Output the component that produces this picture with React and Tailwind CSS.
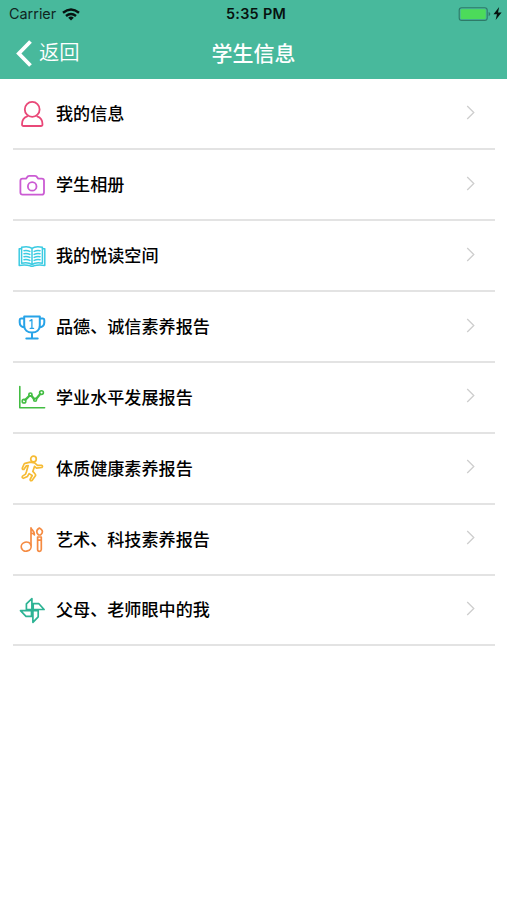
import React from "react";

const iconProps = {
  viewBox: "0 0 28 28",
  fill: "none",
  strokeWidth: 1.8,
  strokeLinejoin: "round",
  strokeLinecap: "round",
  className: "w-7 h-7 shrink-0",
};

const Person = () => (
  <svg {...iconProps} stroke="#e94878">
    <ellipse cx="14.2" cy="9.4" rx="7.4" ry="7.5" />
    <path d="M9.2 16.4C5.8 17.6 4 20.4 4 24.2Q4 26 5.6 26H22.8Q24.5 26 24.5 24.2C24.5 20.4 22.6 17.6 19.2 16.4" />
  </svg>
);

const Camera = () => (
  <svg {...iconProps} stroke="#cb5bd3">
    <path d="M4.6 7.6H8L10 5.2Q10.5 4.8 11.2 4.8H17Q17.7 4.8 18.2 5.2L20.2 7.6H23.8Q26 7.6 26 9.8V21.4Q26 23.6 23.8 23.6H4.6Q2.4 23.6 2.4 21.4V9.8Q2.4 7.6 4.6 7.6Z" />
    <circle cx="14.2" cy="15.4" r="4.3" />
  </svg>
);

const Book = () => (
  <svg {...iconProps} stroke="#3ccbe2" strokeWidth={1.5}>
    <path d="M14 6.4C11.8 4.6 7.4 4.4 3.6 5.2V21.2C7.4 20.5 11.8 20.9 14 22.7C16.2 20.9 20.6 20.5 24.4 21.2V5.2C20.6 4.4 16.2 4.6 14 6.4ZM14 6.4V22.7" />
    <path d="M3.5 6.8H1.2V23.4C5 23 9 22.9 12.2 23.8Q14 24.8 15.8 23.8C19 22.9 23 23 26.8 23.4V6.8H24.5" />
    <path d="M6 8.7Q9 8 11.8 9.4M6 11.7Q9 11 11.8 12.4M6 14.7Q9 14 11.8 15.4M6 17.7Q9 17 11.8 18.4M22 8.7Q19 8 16.2 9.4M22 11.7Q19 11 16.2 12.4M22 14.7Q19 14 16.2 15.4M22 17.7Q19 17 16.2 18.4" />
  </svg>
);

const Trophy = () => (
  <svg {...iconProps} stroke="#27a3e8" strokeWidth={2}>
    <path d="M6.2 3.4H21.8V12.4C21.8 17 18.4 19.4 14 19.4S6.2 17 6.2 12.4ZM6.2 5.5H3Q1.7 5.5 1.7 7V9.6C1.7 12.4 3.8 14.2 6.6 14.6M21.8 5.5H25Q26.3 5.5 26.3 7V9.6C26.3 12.4 24.2 14.2 21.4 14.6M14 19.6V25.4M8.3 25.6H19.7" />
    <path d="M11.9 7.9L13.9 6.6V15.4M12.2 15.4H15.6" strokeWidth="1.3" />
  </svg>
);

const Chart = () => (
  <svg {...iconProps} stroke="#43bd43" strokeWidth={1.6}>
    <path d="M1.8 3.6V24.7H26.6" />
    <path d="M7.3 16.9L11.4 12.8M13.5 12.8L16 16M18.3 15.7L22.2 11" strokeWidth="2.3" />
    <circle cx="6" cy="18.2" r="1.8" />
    <circle cx="12.4" cy="11.6" r="1.6" />
    <circle cx="17.1" cy="16.8" r="1.5" />
    <circle cx="23.5" cy="9.6" r="1.9" />
  </svg>
);

const Runner = () => (
  <svg {...iconProps} stroke="#f6bb34" strokeWidth={1.7}>
    <circle cx="15.5" cy="5" r="2.8" />
    <path d="M12 8.2L7.2 9.3Q6.3 9.6 5.9 10.5L4.3 14.2Q4.2 15.8 5.8 15.4L8.2 11.9L10.2 11.5L8.5 17.4L7.6 20.1L4.5 22.1Q3.5 23.8 5.4 24.3L9.5 22.4L11.1 19.6L14.2 21.5L12.1 25.5Q12.2 27.3 14 26.5L17.6 21.5Q17.8 20.6 17 19.8L14.8 17.4L16.5 12.4L18.5 14.2L23.8 13.5Q25.3 12.2 23.6 11.3L19.5 11.4L16.6 8.9Z" />
  </svg>
);

const Arts = () => (
  <svg {...iconProps} stroke="#f58b42" strokeWidth={1.7}>
    <ellipse cx="8.2" cy="21.6" rx="5" ry="4.5" transform="rotate(-16 8.2 21.6)" />
    <path d="M13 20V2.8C13.3 5.2 16.8 5.8 16.4 9.8C15.6 8.4 14.2 8.2 13 8" />
    <path d="M21.4 3C18.8 4.5 18.3 6.3 19.2 8.3L20.5 10H22.6L24 8.3C25 6.3 24 4.4 21.4 3Z" />
    <path d="M19.6 12H23.3V24.5Q23.1 26.4 21.4 26.4T19.6 24.5Z M19.6 15.2H23.3" />
  </svg>
);

const Pinwheel = () => (
  <svg {...iconProps} stroke="#2db394" strokeWidth={1.7}>
    <path d="M13.9 13.5V2.6L8.4 7.8V13.5Z M15.2 13.5H26.1L20.9 7.7H15.2Z M14.9 14.7V26.3L20.2 20.8V14.7Z M13.5 14.7H2.5L8 20.4H13.5Z" />
  </svg>
);

const rows = [
  [Person, "我的信息"],
  [Camera, "学生相册"],
  [Book, "我的悦读空间"],
  [Trophy, "品德、诚信素养报告"],
  [Chart, "学业水平发展报告"],
  [Runner, "体质健康素养报告"],
  [Arts, "艺术、科技素养报告"],
  [Pinwheel, "父母、老师眼中的我"],
];

const Header = () => (
  <header className="h-[79px] bg-[#48b99c]">
    <div className="grid h-[27px] grid-cols-3 items-center pl-[9px] pr-[5px] pt-px text-black">
      <div className="flex items-center gap-[6px]">
        <span className="text-[14.4px] leading-none text-[#10261f]">Carrier</span>
        <svg viewBox="0 0 18 13" className="h-[13px] w-[18px]" fill="none" stroke="#07120f" strokeWidth="2.4">
          <path d="M1 4.8Q9-1.8 17 4.8M4 8Q9 3.8 14 8" />
          <path d="M6.2 9.7Q9 7.4 11.8 9.7L9 12.6Z" fill="#07120f" stroke="none" />
        </svg>
      </div>
      <div className="pl-px text-center text-[14.4px] font-semibold leading-none tracking-[0.3px] text-[#07120f]">5:35 PM</div>
      <div className="flex items-center justify-end gap-[2px]">
        <svg viewBox="0 0 33 14" className="mb-px h-[14px] w-[33px]">
          <rect x="1.2" y=".8" width="28" height="12.6" rx="2.5" fill="none" stroke="#2e7a67" strokeWidth="1.1" />
          <rect x="2.7" y="2.3" width="25" height="9.6" rx="1.2" fill="#4cdb5a" />
          <path d="M30.6 5V9.2Q32.3 8.6 32.3 7.1T30.6 5Z" fill="#2e7a67" />
        </svg>
        <svg viewBox="0 0 8 12" className="mb-px h-[13px] w-[9px]" fill="#07120f">
          <path d="M5.5 0L.3 6.6H3.5L2.3 12L7.8 5H4.5Z" />
        </svg>
      </div>
    </div>
    <div className="grid h-[52px] grid-cols-[1fr_auto_1fr] items-center text-white">
      <div className="flex items-center gap-[7px] pl-4">
        <svg viewBox="0 0 16 27" className="h-[27px] w-4" fill="none" stroke="white" strokeWidth="3.8">
          <path d="M14.5 1.5L2.8 13.5L14.5 25.5" />
        </svg>
        <span className="text-[20.3px] font-[350] leading-none">返回</span>
      </div>
      <h1 className="text-[21px] font-medium leading-none">学生信息</h1>
    </div>
  </header>
);

export default function App() {
  return (
    <div className="min-h-[900px] w-full bg-white font-['Inter','Noto_Sans_CJK_SC',sans-serif]">
      <Header />
      <main className="pl-[13px] pr-3 pt-[0.5px]">
        {rows.map(([Icon, label]) => (
          <div
            key={label}
            className="flex h-[70.86px] items-center border-b-2 border-[#e3e3e3] pl-[5px] pr-5"
          >
            <Icon />
            <span className="ml-[10px] text-[17.1px] font-medium leading-none text-black">{label}</span>
            <svg viewBox="0 0 9 16" className="mb-[3px] ml-auto h-[15px] w-[9px]" fill="none" stroke="#cecece" strokeWidth="1.4">
              <path d="M1 1L8 8L1 15" />
            </svg>
          </div>
        ))}
      </main>
    </div>
  );
}
